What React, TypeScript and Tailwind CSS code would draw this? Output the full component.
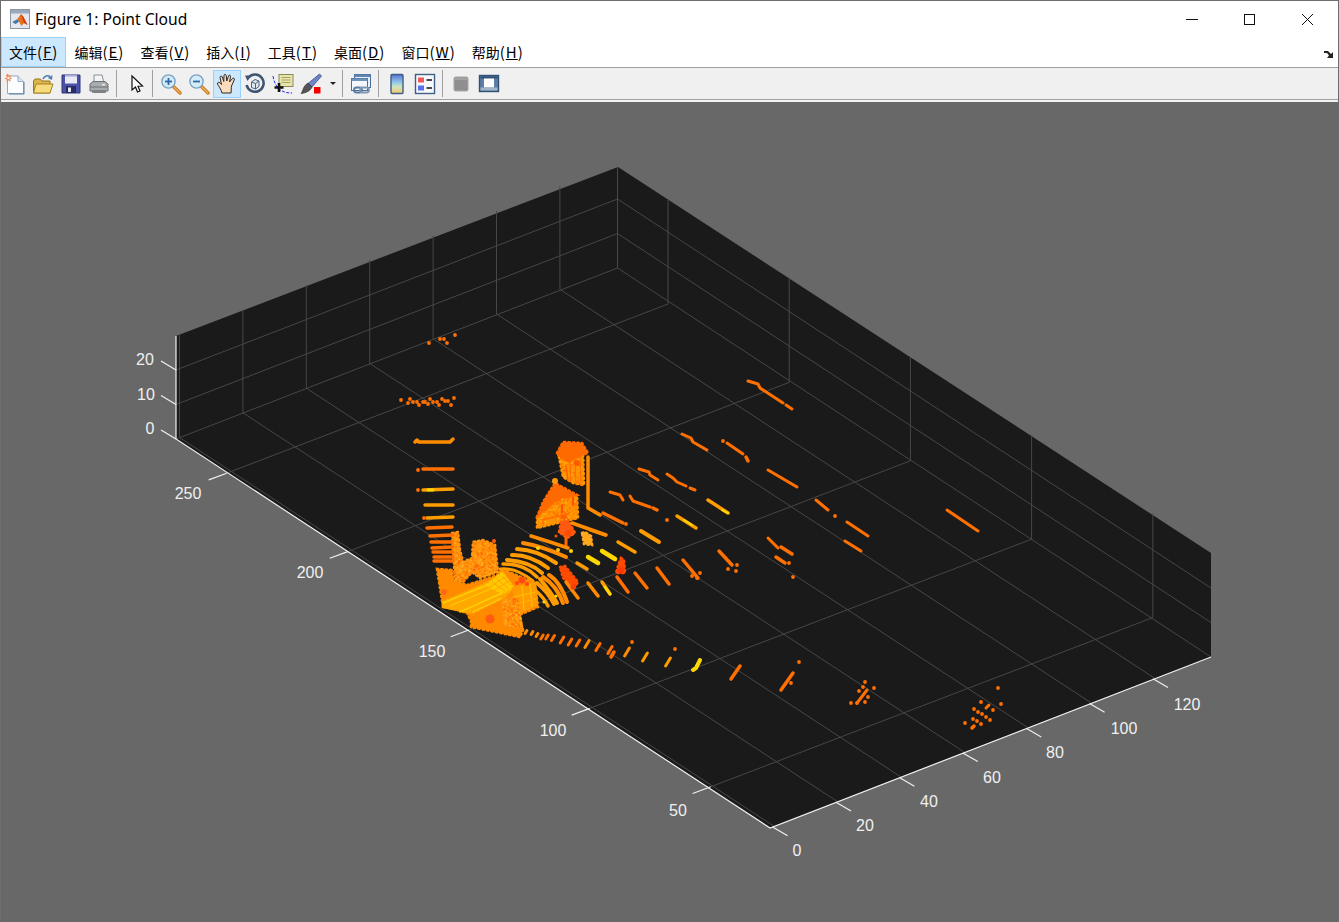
import React from "react";

const OR = "#ff7000";
const O2 = "#ff8c00";
const O3 = "#ff9c00";
const YL = "#ffd800";
const RD = "#ff4a00";

const strokes: [string, number, string][] = [
  [OR, 3, "748,381 758,384 760,388 783,403"], [OR, 3, "786,405 792,409"],
  [OR, 3, "682,434 691,438 693,442 707,450"], [OR, 3, "727,443 743,454"], [OR, 3.5, "746,457 748,461"],
  [OR, 3, "768,470 797,487"], [OR, 3, "816,500 828,510"], [OR, 3, "847,522 868,536"],
  [OR, 3, "947,510 978,531"], [OR, 3, "845,541 861,551"],
  [OR, 3, "639,469 649,472 650,475 658,480"], [OR, 3, "667,474 673,478 677,482 686,486"], [OR, 3, "690,488 695,490"],
  [OR, 3, "610,492 620,495 623,500"], [OR, 3, "630,496 633,501 650,507"], [OR, 3.5, "653,508 657,510"],
  [OR, 3, "590,509 599,514"], [OR, 3.5, "603,513 623,523"], [OR, 3, "590,530 605,535"],
  [O3, 3.5, "708,500 728,513"], [YL, 2, "722,510 728,513"],
  [O3, 3.5, "677,516 696,528"], [YL, 2, "684,520 692,525"],
  [O3, 4, "641,531 659,542"], [O3, 3.5, "618,542 635,552"], [YL, 4.5, "602,551 615,559"], [YL, 4.5, "588,557 598,563"], [O3, 3.5, "577,563 587,569"],
  [OR, 3.5, "683,560 698,578"], [OR, 3.5, "719,551 732,565"], [OR, 3, "768,538 778,548"], [OR, 3.5, "781,547 792,554"], [OR, 3.5, "776,557 785,563"],
  [OR, 3.5, "657,568 669,584"], [OR, 3.5, "635,573 647,588"], [OR, 3.5, "617,577 628,592"], [O3, 3.5, "602,582 610,594"], [YL, 3, "605,587 610,594"], [O2, 3.5, "588,583 598,596"], [O2, 3.5, "566,582 578,598"],
  [O2, 3.5, "415,442 417,440 419,442 450,442 453,439"], [OR, 3.5, "423,469 453,469"], [O3, 3.5, "423,490 453,489"], [YL, 3, "428,490 433,490"],
  [O3, 3.5, "425,505 453,505"], [O3, 3.5, "427,518 453,517"], [OR, 3.5, "427,528 452,527"], [OR, 3.5, "430,536 453,535"], [OR, 3.5, "431,542 452,542"], [OR, 3.5, "432,548 453,547"], [OR, 3.5, "433,552 453,552"], [OR, 3.5, "434,557 453,557"], [OR, 3.5, "434,561 453,561"],
  [O2, 3.5, "572,523 606,535"], [O2, 3.5, "588,457 588,508 600,515"],
  [YL, 4, "693,670 696,668 700,660"], [OR, 3.5, "731,679 740,666"], [OR, 3.5, "781,690 793,673"],
  [OR, 3, "857,703 867,690"], [OR, 3, "986,708 989,705"], [OR, 3.5, "972,728 974,726"], [OR, 3.5, "611,657 614,652"],
];

const arcs: [string, number, number[]][] = [
  [O2, 3.5, [531, 536, 550, 542, 568, 548]],
  [O2, 4, [523, 543, 543, 548, 566, 557]],
  [O3, 4, [517, 549, 537, 553, 556, 563]],
  [O3, 4, [512, 555, 530, 558, 548, 568]],
  [O3, 4, [507, 560, 527, 564, 542, 573]],
  [O3, 3.5, [503, 564, 522, 567, 537, 577]],
  [O3, 3, [500, 569, 516, 571, 533, 581]],
  [O2, 4, [549, 575, 559, 585, 567, 602]],
  [O2, 4, [543, 577, 555, 588, 563, 603]],
  [O3, 4, [540, 579, 550, 592, 557, 603]],
  [O3, 4, [537, 583, 547, 593, 554, 604]],
  [O3, 3.5, [535, 590, 543, 598, 548, 606]],
];

const stubs: [number, number, number, string][] = [
  [526, 632, 1.5, O2], [532, 633, 1.5, O2], [537, 635, 1.5, O2], [542, 637, 2, OR], [547, 637, 2, OR], [553, 638, 2.5, OR], [562, 640, 3, OR], [570, 642, 3, OR], [578, 643, 3, OR], [587, 644, 3.5, O2], [598, 647, 3.5, OR], [610, 650, 3.5, OR], [627, 652, 4, O2], [645, 657, 4, O3], [668, 662, 4, O3],
];

const dots: [number, number][] = [
  [723, 441], [835, 516], [626, 524], [667, 520], [737, 565], [728, 569], [736, 571], [789, 563], [793, 577], [692, 576], [700, 573], [697, 578],
  [429, 343], [440, 339], [444, 339], [447, 343], [455, 335],
  [401, 400], [408, 403], [410, 399], [413, 402], [417, 402], [419, 405], [423, 402], [425, 402], [428, 404], [430, 399], [433, 402], [437, 402], [439, 405], [442, 399], [445, 401], [448, 401], [451, 405], [454, 398],
  [418, 470], [418, 490], [424, 518], [632, 642], [675, 649], [791, 683], [799, 662],
  [865, 682], [863, 687], [874, 688], [859, 691], [868, 697], [865, 702], [851, 703], [857, 703],
  [998, 688], [981, 702], [1001, 704], [974, 709], [978, 712], [982, 714], [986, 717], [990, 720], [993, 710], [973, 719], [977, 721], [981, 724], [965, 723],
];

const poly: [string, string][] = [
  ["#ff8a00", "437,569 443,607 457,610 467,613 471,621 471,627 520,637 523,630 519,615 538,607 535,583 502,569 498,575 467,585 453,580 452,570"],
  ["#ff9210", "452,533 458,532 460,550 463,562 472,558 473,542 483,540 495,545 498,572 480,578 472,572 463,582 455,580"],
  ["#ffa800", "443,602 487,583 503,573 513,588 503,598 472,613 458,610 443,607"],
  ["#ffc800", "487,585 502,573 513,587 502,593"],
  ["#ff9a00", "513,588 535,583 537,605 518,613"],
  ["#ff9210", "502,598 518,598 522,628 505,625"],
  ["#ff9200", "559,457 568,462 583,455 584,485 573,483 563,477"],
  ["#ff6a00", "557,453 563,442 582,443 588,453 577,457 568,462 560,457"],
  ["#ff9200", "537,517 537,528 578,518 577,495 557,500"],
  ["#ff6a00", "537,517 543,502 555,483 577,495 557,500"],
  ["#ff5a10", "559,532 563,513 568,520 575,533 567,538"],
  ["#ffa820", "582,533 585,532 591,536 592,545 584,544"],
  [RD, "560,567 565,566 578,582 575,587 563,578"],
  [RD, "621,558 624,560 625,573 616,573 619,563"],
];

const thin: [string, number, string][] = [
  ["#ffd000", 1.5, "443,603 487,585"], ["#ffd000", 1.5, "460,612 502,593"], ["#ffd000", 1.2, "473,612 502,598"], ["#ffd000", 1, "450,606 495,587"],
  ["#ff9a00", 0.8, "492,582 505,591"], ["#ff9a00", 0.8, "497,579 509,589"], ["#ff9a00", 0.8, "502,576 511,585"], ["#ff9a00", 0.8, "490,587 505,577"], ["#ff9a00", 0.8, "495,590 509,581"],
  ["#ffc000", 1.2, "522,586 524,609"], ["#ffc000", 1.2, "530,584 532,606"], ["#ffc000", 1.2, "514,597 536,592"], ["#ffb000", 1.2, "516,604 536,599"],
  ["#ff6a00", 1, "570,462 571,482"], ["#ff6a00", 1, "575,460 576,484"], ["#ff6a00", 1, "580,457 581,485"], ["#ff6000", 1.5, "566,466 568,480"],
  ["#ff5000", 2, "562,505 562,512"], ["#ff5000", 2, "573,498 573,505"], ["#ff6a00", 3, "566,538 566,545"], ["#ff6a00", 1.5, "542,520 570,513"],
];

const blobs: [number, number, number, string][] = [
  [490, 619, 4.5, "#ff5a10"], [444, 592, 3, "#ff6a10"], [522, 580, 3.5, "#ff4a10"], [517, 583, 2, "#ff4a10"], [527, 584, 2, "#ff4a10"], [494, 541, 2, "#ff5a10"], [573, 587, 2.5, "#ff3a00"], [568, 533, 3, "#ff4a00"], [556, 536, 1.5, "#ff5000"], [621, 570, 3.5, "#ff3a00"], [555, 481, 3, "#ff9a10"], [577, 463, 3, "#ff5a00"], [558, 550, 2, "#ffc000"],
];

function makeSpeckle() {
  let s = 12345;
  const r = () => { s = (s * 1103515245 + 12345) & 0x7fffffff; return s / 0x7fffffff; };
  const regions: [number, number, number, number, number][] = [
    [452, 532, 46, 50, 520], [502, 598, 20, 30, 180], [558, 455, 26, 30, 110], [538, 498, 40, 30, 150],
  ];
  const cols = ["#ff7a00", "#ffb020", "#ff6a00", "#ffa000"];
  const out: { x: number; y: number; c: string; k: number }[] = [];
  regions.forEach(([x, y, w, h, n], k) => {
    for (let i = 0; i < n; i++) out.push({ x: x + r() * w, y: y + r() * h, c: cols[Math.floor(r() * 4)], k });
  });
  return out;
}
const speckle = makeSpeckle();
const clips = [
  "452,533 458,532 460,550 463,562 472,558 473,542 483,540 495,545 498,572 480,578 472,572 463,582 455,580",
  "502,598 518,598 522,628 505,625",
  "559,457 568,462 583,455 584,485 573,483 563,477",
  "537,517 537,528 578,518 577,495 557,500",
];

const GRID = "#474747";
const kx = [0, 1, 2, 3, 4, 5, 6];
const jy = [0, 1, 2, 3, 4];

const arcPath = (a: number[]) => {
  const cx = 2 * a[2] - (a[0] + a[4]) / 2;
  const cy = 2 * a[3] - (a[1] + a[5]) / 2;
  return `M${a[0]} ${a[1]} Q${cx} ${cy} ${a[4]} ${a[5]}`;
};

function Plot() {
  return (
    <svg viewBox="1 102 1337 820" className="block w-full h-full">
      <polygon points="176,336 618,167 1211,553 1211,657 770,828 176,439" fill="#1a1a1a" />
      <g stroke={GRID} strokeWidth="1" fill="none">
        {kx.map((k) => (
          <g key={k}>
            <line x1={179.5 + 63.4 * k} y1={437.5 - 24.7 * k} x2={773.6 + 63.4 * k} y2={826 - 24.7 * k} />
            <line x1={179.5 + 63.4 * k} y1={437.5 - 24.7 * k} x2={179.5 + 63.4 * k} y2={334.5 - 24.7 * k} />
          </g>
        ))}
        {jy.map((j) => (
          <g key={j}>
            <line x1={226.7 + 121 * j} y1={473.2 + 78.4 * j} x2={668 + 121.2 * j} y2={304 + 78.4 * j} />
            <line x1={668 + 121.2 * j} y1={304 + 78.4 * j} x2={668 + 121.2 * j} y2={200 + 78.4 * j} />
          </g>
        ))}
        <line x1="617.5" y1="268" x2="617.5" y2="167" />
        <polyline points="176,439 617.5,268 1211,657" />
        <polyline points="176,404.5 617.5,233.5 1211,622.5" />
        <polyline points="176,370 617.5,199 1211,588" />
      </g>

      <g stroke="#f0f0f0" strokeWidth="1.2" fill="none">
        <polyline points="176,336 176,439 770,828 1211,657" />
        {kx.map((k) => (
          <line key={k} x1={773.6 + 63.4 * k - 1} y1={826 - 24.7 * k + 1} x2={787.6 + 63.4 * k} y2={835.7 - 24.7 * k} />
        ))}
        {jy.map((j) => (
          <line key={j} x1={226.7 + 121 * j} y1={473.2 + 78.4 * j} x2={208.7 + 121 * j} y2={479.9 + 78.4 * j} />
        ))}
        {[0, 1, 2].map((m) => (
          <line key={m} x1="176" y1={439 - 34.5 * m} x2="161" y2={430 - 34.5 * m} />
        ))}
      </g>

      <g fill="#f0f0f0" fontSize="16" fontFamily="'Liberation Sans', Arial, sans-serif" textAnchor="middle" dominantBaseline="central">
        <text x="145" y="359">20</text>
        <text x="146" y="394">10</text>
        <text x="150" y="428">0</text>
        <text x="188" y="493">250</text>
        <text x="310" y="572">200</text>
        <text x="432" y="651">150</text>
        <text x="553" y="730">100</text>
        <text x="678" y="810">50</text>
        <text x="797" y="850">0</text>
        <text x="865" y="825">20</text>
        <text x="929" y="801">40</text>
        <text x="992" y="777">60</text>
        <text x="1055" y="752">80</text>
        <text x="1124" y="728">100</text>
        <text x="1187" y="704">120</text>
      </g>

      <defs>
        {clips.map((c, i) => (
          <clipPath id={`clip${i}`} key={i}>
            <polygon points={c} />
          </clipPath>
        ))}
      </defs>

      {poly.map(([c, p], i) => (
        <g key={i}>
          <polygon points={p} fill={c} />
          <polygon points={p} fill="none" stroke={c} strokeWidth="2.6" strokeLinecap="round" strokeDasharray="1.5 3" />
        </g>
      ))}
      {clips.map((_, i) => (
        <g key={i} clipPath={`url(#clip${i})`}>
          {speckle.filter((d) => d.k === i).map((d, n) => (
            <rect key={n} x={d.x} y={d.y} width="1.7" height="1.7" fill={d.c} />
          ))}
        </g>
      ))}
      {thin.concat(strokes).map(([c, w, p], i) => (
        <polyline key={i} points={p} fill="none" stroke={c} strokeWidth={w} strokeLinecap="round" strokeLinejoin="round" />
      ))}
      {arcs.map(([c, w, a], i) => (
        <path key={i} d={arcPath(a)} fill="none" stroke={c} strokeWidth={w} strokeLinecap="round" />
      ))}
      <g fill={YL}>
        <circle cx="538" cy="548" r="2" />
        <circle cx="571" cy="551" r="2" />
        <circle cx="556" cy="596" r="1.5" />
        <circle cx="544" cy="602" r="1.5" />
      </g>
      {stubs.map(([x, y, h, c], i) => (
        <line key={i} x1={x - h * 0.6} y1={y + h} x2={x + h * 0.6} y2={y - h} stroke={c} strokeWidth="3" strokeLinecap="round" />
      ))}
      {dots.map(([x, y], i) => (
        <circle key={i} cx={x} cy={y} r="1.9" fill={OR} />
      ))}
      {blobs.map(([x, y, r, c], i) => (
        <circle key={i} cx={x} cy={y} r={r} fill={c} />
      ))}
    </svg>
  );
}

function MatlabLogo() {
  return (
    <svg width="20" height="20" viewBox="0 0 20 20" className="shrink-0">
      <rect x="0.5" y="0.5" width="19" height="19" fill="#e4e8ee" stroke="#8d96a3" />
      <rect x="1" y="1" width="18" height="3.5" fill="#9aa9bb" />
      <path d="M2.5 13 L7 10.5 L11 5 L13.5 8 L17.5 16 L14 14 L11.5 17 L9 12.5 L5.5 15 Z" fill="#e8701a" />
      <path d="M2.5 13 L7 10.5 L9 12.5 L5.5 15 Z" fill="#2f7fc1" />
      <path d="M11 5 L13.5 8 L17.5 16 L14 14 Z" fill="#d13b12" />
    </svg>
  );
}

const Ico = ({ children }: { children: React.ReactNode }) => (
  <svg width="22" height="22" viewBox="0 0 22 22">{children}</svg>
);

const NewIcon = () => (
  <Ico>
    <path d="M3.5 3 H14 L19.5 8.5 V20.5 H3.5 Z" fill="#fbfdff" stroke="#8fa9c8" />
    <path d="M14 3 V8.5 H19.5" fill="#dbe7f5" stroke="#8fa9c8" />
    <path d="M5 21 H20 V9" fill="none" stroke="#5c7ea8" />
    <path d="M4 0.5 L5 3 L7.5 2 L6.2 4.5 L8.5 5.5 L6 6.3 L6.8 9 L4.3 7.2 L2.4 9 L2.8 6.4 L0.5 5.5 L2.8 4.4 L2 2 Z" fill="#ef8a5c" />
    <circle cx="4.5" cy="5" r="1.2" fill="#fff2d0" />
  </Ico>
);
const OpenIcon = () => (
  <Ico>
    <path d="M1.5 8 V20 H18 V8 H10 L8.5 6 H3 Z" fill="#dcb54c" stroke="#96761c" />
    <path d="M1.5 20 L4 11 H21 L18 20 Z" fill="#f7dc7e" stroke="#a58320" />
    <path d="M11 6 C12.5 3 15.5 2 18 3.5" fill="none" stroke="#4f7fb5" strokeWidth="1.5" />
    <path d="M20.5 2 L20 7 L15.8 5 Z" fill="#4f7fb5" />
  </Ico>
);
const SaveIcon = () => (
  <Ico>
    <path d="M2 2 H20 V20 H2 Z" fill="#4b53a8" stroke="#2f3679" />
    <rect x="5" y="2.5" width="12" height="8" fill="#e9eaf6" />
    <path d="M5 2.5 H17 V4 H5 Z" fill="#bfc3ea" />
    <rect x="6" y="13" width="10" height="7" fill="#272c63" />
    <rect x="8" y="14.5" width="3" height="4.5" fill="#e4e6f2" />
  </Ico>
);
const PrintIcon = () => (
  <Ico>
    <path d="M6 2 H14 L16 10 H6 Z" fill="#f2f4f6" stroke="#8a8f94" />
    <path d="M2 11 L5 8.5 H17 L20 11 V18 H2 Z" fill="#a9acaf" stroke="#6d7074" />
    <path d="M2 14 H20" stroke="#6d7074" />
    <rect x="4" y="17" width="14" height="3" rx="1" fill="#7e8285" />
    <rect x="14" y="11" width="3" height="1.5" fill="#e8e8e8" />
  </Ico>
);
const ArrowIcon = () => (
  <Ico>
    <path d="M6 3 V17 L9.5 14 L11.5 19 L14 18 L12 13.2 L16.5 13 Z" fill="#ffffff" stroke="#111" strokeWidth="1.2" strokeLinejoin="miter" />
  </Ico>
);
const Mag = ({ plus }: { plus: boolean }) => (
  <Ico>
    <path d="M13 13 L20 20" stroke="#c9791c" strokeWidth="3.4" strokeLinecap="round" />
    <path d="M14 14 L20 20" stroke="#f2b45a" strokeWidth="1.2" strokeLinecap="round" />
    <circle cx="8.5" cy="8.5" r="6.6" fill="#d4ebf8" stroke="#7ba3c2" strokeWidth="1.4" />
    <path d="M5 8.5 H12" stroke="#2d6aa5" strokeWidth="1.8" />
    {plus && <path d="M8.5 5 V12" stroke="#2d6aa5" strokeWidth="1.8" />}
  </Ico>
);
const HandIcon = () => (
  <Ico>
    <path d="M6 20 C5 16 2.5 13 1.5 11 C1 9.5 3 8.5 4.2 10 L5.5 11.5 L4 4.5 C3.8 3 5.8 2.5 6.3 4 L7.8 8.5 L8 2.5 C8 1 10 1 10.2 2.5 L10.8 8 L12.5 3 C13 1.5 14.8 2 14.5 3.8 L13.5 9 L16.5 5.5 C17.5 4.5 19 5.5 18.2 7 L15.5 13 C15 15 15.5 17 15 20 Z" fill="#fbdcbc" stroke="#2a2a2a" strokeWidth="1" strokeLinejoin="round" />
  </Ico>
);
const RotateIcon = () => (
  <Ico>
    <path d="M4.5 4.5 A8.6 8.6 0 1 1 2.6 12" fill="none" stroke="#3d5573" strokeWidth="2.6" />
    <path d="M1 2.5 L7.5 2.5 L3.5 8 Z" fill="#3d5573" />
    <path d="M7.5 9 L11 6.5 L15 8 V13.5 L11.5 16 L7.5 14.5 Z" fill="#dfe6ee" stroke="#4a6380" />
    <path d="M7.5 9 L11.5 10.5 L15 8 M11.5 10.5 V16" fill="none" stroke="#4a6380" />
  </Ico>
);
const DataTipIcon = () => (
  <Ico>
    <path d="M1 3 C2 10 5 15 10 18 C13 19.5 16 20 20 20" fill="none" stroke="#2a2ae8" strokeDasharray="3 1.5" />
    <rect x="7" y="1.5" width="14" height="12" fill="#e7e5a8" stroke="#8a8a5a" />
    <path d="M9.5 4.5 H18.5 M9.5 7 H18.5 M9.5 9.5 H18.5" stroke="#a6a572" />
    <path d="M7 10 V19 M2.5 14.5 H11.5" stroke="#111" strokeWidth="2.6" />
  </Ico>
);
const BrushIcon = () => (
  <Ico>
    <path d="M19.5 1 L21.5 3 L12 14 L8 10.5 Z" fill="#6f84c8" stroke="#3f4e86" strokeWidth="0.8" />
    <path d="M8 10 L12 14 C11 17 7 20 1 20.5 C3.5 17.5 2.5 13.5 8 10 Z" fill="#555" stroke="#2c2c2c" strokeWidth="0.6" />
    <rect x="14" y="14" width="6.5" height="6.5" fill="#f00000" />
  </Ico>
);
const LinkIcon = () => (
  <Ico>
    <rect x="4.5" y="1.5" width="16" height="13" fill="#e8eef5" stroke="#4a6f99" />
    <rect x="4.5" y="1.5" width="16" height="2.5" fill="#5f86b0" />
    <rect x="1.5" y="5.5" width="16" height="12" fill="#f3f6fa" stroke="#4a6f99" />
    <rect x="1.5" y="5.5" width="16" height="2.5" fill="#6f93ba" />
    <rect x="4" y="14.5" width="8" height="5" rx="2.5" fill="none" stroke="#587a9f" strokeWidth="1.8" />
    <rect x="10" y="14.5" width="9" height="5" rx="2.5" fill="none" stroke="#7f97b2" strokeWidth="1.8" />
  </Ico>
);
const ColorbarIcon = () => (
  <Ico>
    <defs>
      <linearGradient id="cbar" x1="0" y1="0" x2="0" y2="1">
        <stop offset="0" stopColor="#5a6fd0" />
        <stop offset="0.4" stopColor="#8fc5e8" />
        <stop offset="0.65" stopColor="#cfe6c0" />
        <stop offset="1" stopColor="#f8c36a" />
      </linearGradient>
    </defs>
    <rect x="5" y="1.5" width="12" height="19" rx="1" fill="url(#cbar)" stroke="#3e5f86" strokeWidth="1.4" />
  </Ico>
);
const LegendIcon = () => (
  <Ico>
    <rect x="1.5" y="1.5" width="19" height="19" fill="#f7f8fb" stroke="#3e5f86" strokeWidth="1.4" />
    <rect x="4" y="4.5" width="6" height="5" fill="#ee5a5a" />
    <rect x="4" y="12.5" width="6" height="5" fill="#5a6ef0" />
    <path d="M12.5 7 H18 M12.5 15 H18" stroke="#111" strokeWidth="1.4" />
  </Ico>
);
const HideIcon = () => (
  <Ico>
    <rect x="4" y="4" width="14" height="14" rx="1.5" fill="#8f8f8f" stroke="#a9a9a9" />
    <rect x="5" y="5" width="12" height="2" fill="#a3a3a3" />
  </Ico>
);
const ShowIcon = () => (
  <Ico>
    <rect x="1.5" y="2.5" width="19" height="16" fill="#5d7fa6" stroke="#2f4f75" strokeWidth="1.4" />
    <rect x="2.5" y="3.5" width="17" height="2" fill="#2f4f75" />
    <rect x="6" y="5.5" width="10" height="9" fill="#ffffff" />
    <rect x="2.5" y="14.5" width="17" height="3" fill="#a4b5c9" />
  </Ico>
);

const Btn = ({ children, active }: { children: React.ReactNode; active?: boolean }) => (
  <div className={`w-7 h-7 flex items-center justify-center shrink-0 border ${active ? "bg-[#cce8ff] border-[#99d1ff]" : "border-transparent"}`}>
    {children}
  </div>
);
const Sep = ({ className }: { className: string }) => (
  <div className={`h-[27px] flex shrink-0 ${className}`}>
    <div className="w-px h-full bg-[#a0a0a0]" />
  </div>
);

const menus: [string, string][] = [
  ["文件", "F"], ["编辑", "E"], ["查看", "V"], ["插入", "I"], ["工具", "T"], ["桌面", "D"], ["窗口", "W"], ["帮助", "H"],
];

export default function App() {
  return (
    <div className="w-[1339px] h-[922px] flex flex-col overflow-hidden bg-white border-x border-[#6e6e6e]">
      <div className="h-[37px] shrink-0 flex items-center bg-white border-t border-[#6e6e6e] pl-[9px] text-black" style={{ fontFamily: "'Noto Sans', sans-serif" }}>
        <MatlabLogo />
        <span className="ml-[5px] pt-[2px] text-[15.6px] leading-none">Figure 1: Point Cloud</span>
        <div className="ml-auto flex">
          {[
            <path key="a" d="M0 5.5 H12" stroke="#111" strokeWidth="1" />,
            <rect key="b" x="0.5" y="0.5" width="10" height="10" fill="none" stroke="#111" />,
            <path key="c" d="M0 0 L11 11 M11 0 L0 11" stroke="#111" strokeWidth="1" />,
          ].map((g, i) => (
            <div key={i} className="w-[58px] h-[36px] flex items-center justify-center">
              <svg width="12" height="11" viewBox="0 0 12 11">{g}</svg>
            </div>
          ))}
          <div className="w-px" />
        </div>
      </div>

      <div className="h-[30px] shrink-0 flex items-stretch bg-white text-[14px] text-black" style={{ fontFamily: "'Noto Sans CJK SC', 'Noto Sans', sans-serif" }}>
        {menus.map(([t, k], i) => (
          <div key={t} className={`flex items-center px-[7px] border ${i === 0 ? "bg-[#cce8ff] border-[#99d1ff]" : "border-transparent"}`}>
            <span className="whitespace-nowrap">{t}<span className="text-[15px] tracking-[1px]">(<span className="underline">{k}</span>)</span></span>
          </div>
        ))}
        <svg width="10" height="8" viewBox="0 0 10 8" className="ml-auto mr-[4px] mt-[13px]">
          <path d="M0 1 H4 L7 4 L9 2 V8 H3 L5 5.5 L3 3 H0 Z" fill="#222" />
        </svg>
      </div>

      <div className="h-[35px] shrink-0 flex flex-col bg-[#f0f0f0] border-t border-[#a0a0a0]">
        <div className="h-[32px] flex items-center border-b border-[#a0a0a0]">
          <Btn><NewIcon /></Btn>
          <Btn><OpenIcon /></Btn>
          <Btn><SaveIcon /></Btn>
          <Btn><PrintIcon /></Btn>
          <Sep className="w-[10px] pl-[3px]" />
          <Btn><ArrowIcon /></Btn>
          <Sep className="w-[6px] pl-[1px]" />
          <Btn><Mag plus /></Btn>
          <Btn><Mag plus={false} /></Btn>
          <Btn active><HandIcon /></Btn>
          <Btn><RotateIcon /></Btn>
          <Btn><DataTipIcon /></Btn>
          <Btn><BrushIcon /></Btn>
          <div className="w-4 h-7 flex items-center justify-center shrink-0">
            <svg width="6" height="3" viewBox="0 0 6 3"><path d="M0 0 H6 L3 3 Z" fill="#222" /></svg>
          </div>
          <Sep className="w-[6px] pl-[1px]" />
          <Btn><LinkIcon /></Btn>
          <Sep className="w-[8px] pl-[3px]" />
          <Btn><ColorbarIcon /></Btn>
          <Btn><LegendIcon /></Btn>
          <Sep className="w-[8px] pl-[3px]" />
          <Btn><HideIcon /></Btn>
          <Btn><ShowIcon /></Btn>
        </div>
        <div className="h-px bg-[#f4f4f4]" />
      </div>

      <div className="flex-1 min-h-0 bg-[#686868]">
        <Plot />
      </div>
    </div>
  );
}
